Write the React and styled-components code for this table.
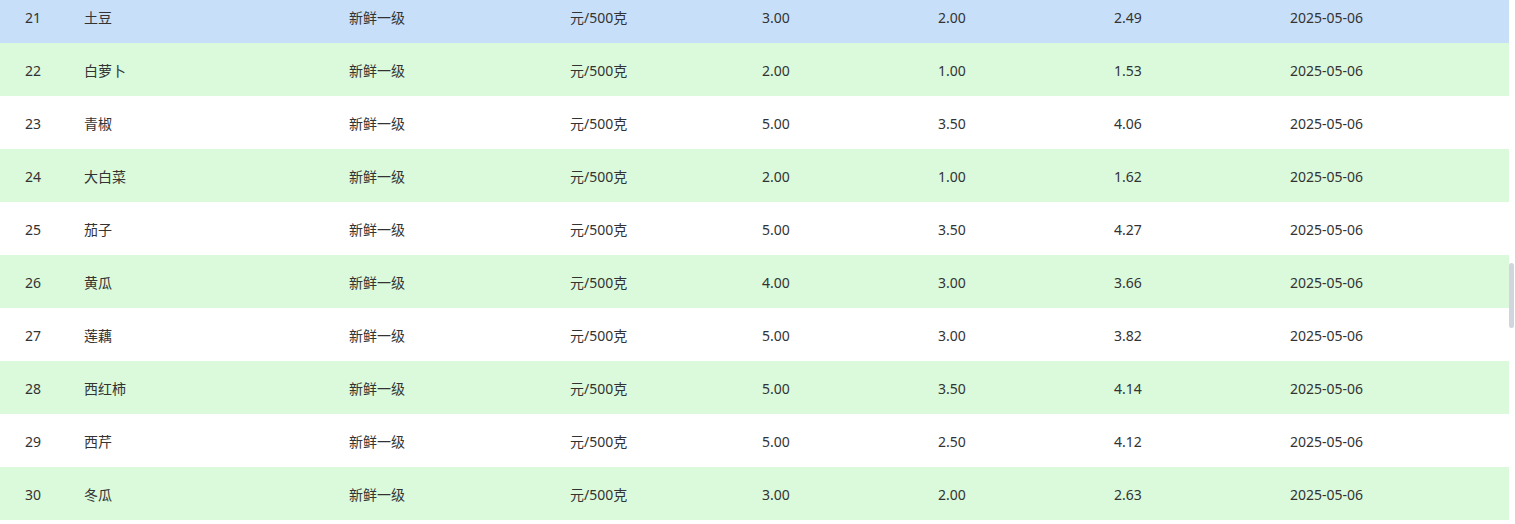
import React, { useLayoutEffect, useRef } from "react";
import styled, { createGlobalStyle } from "styled-components";

const GlobalStyle = createGlobalStyle`
  html, body {
    margin: 0;
    padding: 0;
    background: #ffffff;
  }
  body {
    font-family: "Noto Sans", "Noto Sans CJK SC", sans-serif;
    font-size: 14px;
    color: #333333;
  }
`;

const rows = [
  { id: 21, name: "土豆", grade: "新鲜一级", unit: "元/500克", max: "3.00", min: "2.00", avg: "2.49", date: "2025-05-06" },
  { id: 22, name: "白萝卜", grade: "新鲜一级", unit: "元/500克", max: "2.00", min: "1.00", avg: "1.53", date: "2025-05-06" },
  { id: 23, name: "青椒", grade: "新鲜一级", unit: "元/500克", max: "5.00", min: "3.50", avg: "4.06", date: "2025-05-06" },
  { id: 24, name: "大白菜", grade: "新鲜一级", unit: "元/500克", max: "2.00", min: "1.00", avg: "1.62", date: "2025-05-06" },
  { id: 25, name: "茄子", grade: "新鲜一级", unit: "元/500克", max: "5.00", min: "3.50", avg: "4.27", date: "2025-05-06" },
  { id: 26, name: "黄瓜", grade: "新鲜一级", unit: "元/500克", max: "4.00", min: "3.00", avg: "3.66", date: "2025-05-06" },
  { id: 27, name: "莲藕", grade: "新鲜一级", unit: "元/500克", max: "5.00", min: "3.00", avg: "3.82", date: "2025-05-06" },
  { id: 28, name: "西红柿", grade: "新鲜一级", unit: "元/500克", max: "5.00", min: "3.50", avg: "4.14", date: "2025-05-06" },
  { id: 29, name: "西芹", grade: "新鲜一级", unit: "元/500克", max: "5.00", min: "2.50", avg: "4.12", date: "2025-05-06" },
  { id: 30, name: "冬瓜", grade: "新鲜一级", unit: "元/500克", max: "3.00", min: "2.00", avg: "2.63", date: "2025-05-06" },
];

const Page = styled.div`
  display: flex;
  width: 1515px;
  height: 524px;
`;

const Viewport = styled.div`
  flex: 1;
  height: 524px;
  overflow: hidden;
`;

const Body = styled.div`
  padding-bottom: 10px;
`;

const Row = styled.div`
  display: grid;
  grid-template-columns: 84px 265px 221px 192px 176px 176px 176px 1fr;
  align-items: center;
  height: 53px;
  background: ${({ $tone }) =>
    $tone === "active" ? "#c8dff9" : $tone === "stripe" ? "#dbf9db" : "#ffffff"};
`;

const Cell = styled.div`
  white-space: nowrap;
  line-height: 20px;
  padding-top: 2px;
  padding-left: ${({ $first }) => ($first ? "25px" : "0")};
`;

const Track = styled.div`
  width: 6px;
  height: 524px;
  display: flex;
  flex-direction: column;
`;

const Thumb = styled.div`
  margin-top: 263px;
  width: 5px;
  height: 65px;
  border-radius: 3px;
  background: #d1d5dd;
`;

export default function App() {
  const ref = useRef(null);
  useLayoutEffect(() => {
    if (ref.current) ref.current.scrollTop = 10;
  }, []);

  return (
    <>
      <GlobalStyle />
      <Page>
        <Viewport ref={ref}>
          <Body>
            {rows.map((r, i) => (
              <Row key={r.id} $tone={i === 0 ? "active" : i % 2 === 1 ? "stripe" : "plain"}>
                <Cell $first>{r.id}</Cell>
                <Cell>{r.name}</Cell>
                <Cell>{r.grade}</Cell>
                <Cell>{r.unit}</Cell>
                <Cell>{r.max}</Cell>
                <Cell>{r.min}</Cell>
                <Cell>{r.avg}</Cell>
                <Cell>{r.date}</Cell>
              </Row>
            ))}
          </Body>
        </Viewport>
        <Track>
          <Thumb />
        </Track>
      </Page>
    </>
  );
}
